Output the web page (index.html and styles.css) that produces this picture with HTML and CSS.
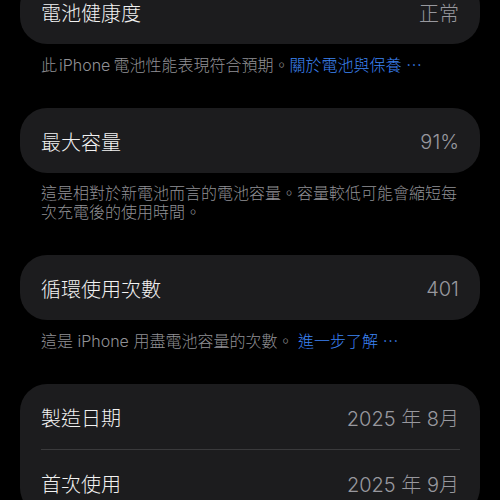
FILE: index.html
```html
<!DOCTYPE html>
<html lang="zh-Hant">
<head>
<meta charset="utf-8">
<title>電池健康度</title>
<link rel="stylesheet" href="styles.css">
</head>
<body>
<main class="page">
  <section class="card card-first">
    <div class="row"><span class="label">電池健康度</span><span class="value">正常</span></div>
  </section>
  <p class="note">此<span class="latin">iPhone</span>電池性能表現符合預期。<a class="link">關於電池與保養 <span class="dots">⋯</span></a></p>

  <section class="card">
    <div class="row"><span class="label">最大容量</span><span class="value">91%</span></div>
  </section>
  <p class="note">這是相對於新電池而言的電池容量。容量較低可能會縮短每次充電後的使用時間。</p>

  <section class="card">
    <div class="row"><span class="label">循環使用次數</span><span class="value">401</span></div>
  </section>
  <p class="note">這是 iPhone 用盡電池容量的次數。 <a class="link">進一步了解 <span class="dots">⋯</span></a></p>

  <section class="card">
    <div class="row"><span class="label">製造日期</span><span class="value">2025 年 8月</span></div>
    <div class="divider"></div>
    <div class="row"><span class="label">首次使用</span><span class="value">2025 年 9月</span></div>
  </section>
</main>
</body>
</html>
```

FILE: styles.css
```css
html, body {
  margin: 0;
  padding: 0;
  background: #000;
  overflow: hidden;
}

body {
  font-family: "Inter", "Noto Sans CJK TC", sans-serif;
  font-weight: 300;
  color: #fff;
  height: 500px;
}

.page {
  display: flex;
  flex-direction: column;
  padding: 0 20px;
}

.card {
  background: #1c1c1e;
  border-radius: 27px;
  display: flex;
  flex-direction: column;
}

.card-first {
  margin-top: -21px;
}

.row {
  height: 65px;
  display: flex;
  align-items: center;
  justify-content: space-between;
  padding: 2px 21px 0;
  box-sizing: border-box;
  font-size: 20px;
}

.label {
  color: #f2f2f2;
}

.value {
  color: #98989e;
}

.divider {
  height: 1px;
  background: #3a3a3c;
  margin: 0 0 0 21px;
  width: 419px;
}

.note {
  margin: 0 0 33px;
  padding: 11px 21px 0;
  font-size: 16px;
  line-height: 19px;
  color: #909095;
}

.latin {
  margin: 0 3px 0 2px;
}

.link {
  color: #3d84f5;
}

.dots {
  font-family: "Noto Sans CJK TC", sans-serif;
}
```
